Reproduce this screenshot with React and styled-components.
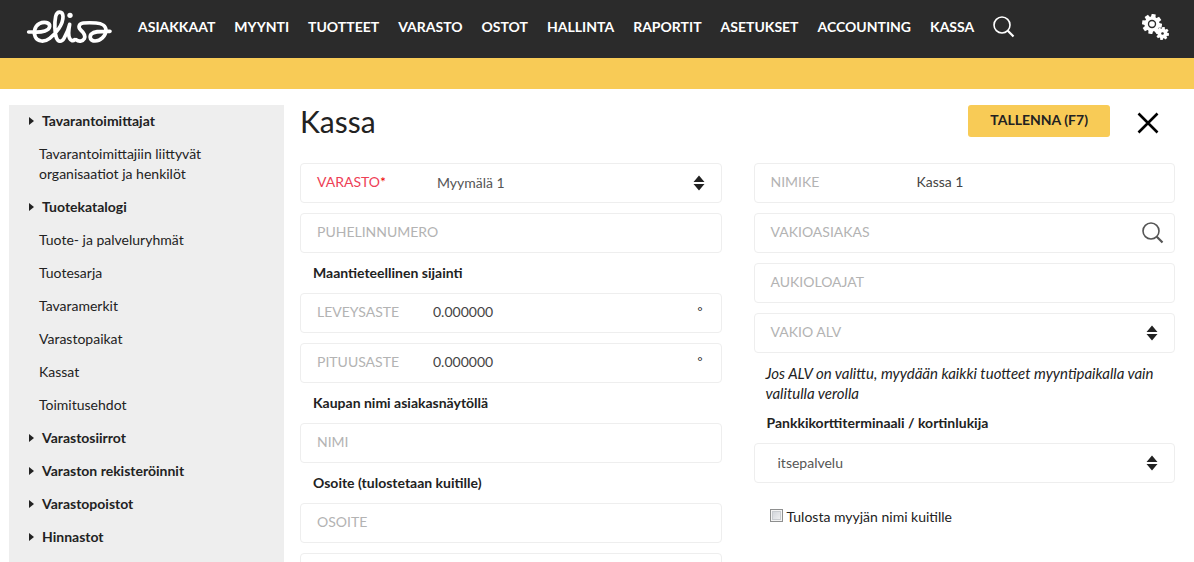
import React from 'react'
import styled, { createGlobalStyle } from 'styled-components'

const GlobalStyle = createGlobalStyle`
    *, *::before, *::after {
        box-sizing: border-box;
    }

    body {
        margin: 0;
        font-family: 'Lato', 'Liberation Sans', sans-serif;
        font-size: 14px;
        line-height: 20px;
        color: #222;
        background: #fff;
    }

    button, input, select {
        font: inherit;
        color: inherit;
    }
`

const Page = styled.div`
    height: 100vh;
    overflow: hidden;
    display: flex;
    flex-direction: column;
`

const Header = styled.header`
    flex: none;
    display: flex;
    align-items: center;
    height: 58px;
    padding: 0 25px 4px 26px;
    background: #2b2b2b;
    color: #fff;
`

const LogoLink = styled.a`
    display: flex;
    margin-right: 25px;
`

const Nav = styled.nav`
    display: flex;
    align-items: center;
    gap: 19px;
    flex: 1;
`

const NavLink = styled.a`
    color: #fff;
    font-weight: 700;
    text-decoration: none;
    text-transform: uppercase;
    white-space: nowrap;
`

const IconButton = styled.button`
    display: flex;
    align-items: center;
    justify-content: center;
    padding: 0;
    border: 0;
    background: none;
    cursor: pointer;
`

const Gears = styled.span`
    display: flex;
    align-items: flex-end;
    padding-bottom: 6px;

    svg + svg {
        margin: 0 0 -6px -6px;
    }
`

const Strip = styled.div`
    flex: none;
    height: 31px;
    background: #f8cb56;
`

const Main = styled.div`
    flex: 1;
    min-height: 0;
    display: flex;
    gap: 16px;
    padding: 16px 19px 0 9px;
`

const Sidebar = styled.aside`
    flex: none;
    width: 275px;
    padding: 6px 20px;
    background: #eee;
`

const Menu = styled.ul`
    display: flex;
    flex-direction: column;
    gap: 13px;
    margin: 0;
    padding: 0;
    list-style: none;
`

const MenuLink = styled.a`
    display: flex;
    align-items: center;
    gap: 8px;
    max-width: 200px;
    padding-left: ${p => p.$group ? '0' : '10px'};
    font-weight: ${p => p.$group ? 700 : 400};
    color: #222;
    text-decoration: none;
`

const Content = styled.main`
    flex: 1;
    min-width: 0;
`

const TitleBar = styled.div`
    display: flex;
    align-items: flex-start;
    height: 58px;
    padding-right: 16px;
`

const Title = styled.h1`
    flex: 1;
    margin: 0;
    font-size: 30px;
    font-weight: 400;
    line-height: 32px;
`

const SaveButton = styled.button`
    height: 32px;
    margin-right: 27px;
    padding: 0 22px 2px;
    border: 0;
    border-radius: 3px;
    background: #f8cb56;
    font-weight: 700;
    cursor: pointer;
`

const CloseButton = styled(IconButton)`
    height: 36px;
`

const Columns = styled.form`
    display: grid;
    grid-template-columns: 1fr 1fr;
    gap: 32px;
`

const Column = styled.div`
    display: flex;
    flex-direction: column;
    gap: 10px;
`

const FieldBox = styled.div`
    flex: none;
    display: flex;
    align-items: center;
    height: 40px;
    padding: 0 16px;
    border: 1px solid #eee;
    border-radius: 4px;
`

const Label = styled.label`
    flex: none;
    min-width: ${p => p.$width || 116}px;
    padding-bottom: 2px;
    color: ${p => p.$required ? '#ee4056' : '#b3b3b3'};
    text-transform: uppercase;
`

const Star = styled.span`
    color: #e00;
`

const Input = styled.input`
    flex: 1;
    min-width: 0;
    height: 38px;
    padding: 0 0 3px;
    border: 0;
    outline: 0;
    background: none;
    color: #444;
`

const Select = styled.select`
    flex: 1;
    min-width: 0;
    height: 38px;
    padding: 0 ${p => p.$indent ? 7 : 4}px;
    border: 0;
    outline: 0;
    appearance: none;
    background: none;
    color: #555;
`

const Unit = styled.span`
    padding: 0 2px 2px 0;
    font-size: 12px;
`

const SelectArrows = styled.svg`
    flex: none;
    pointer-events: none;
`

const LookupButton = styled(IconButton)`
    margin-right: -6px;
`

const SectionTitle = styled.h2`
    margin: 0;
    padding-left: 13px;
    font-size: 14px;
    font-weight: 700;
    line-height: 20px;
`

const Note = styled.p`
    margin: 0;
    padding: 0 12px;
    font-size: 15px;
    font-style: italic;
`

const CheckRow = styled.label`
    display: flex;
    align-items: center;
    gap: 4px;
    padding: 14px 16px;
`

const Checkbox = styled.input`
    appearance: none;
    width: 13px;
    height: 13px;
    margin: 0 0 3px;
    border: 1px solid #8e8f8f;
    background: linear-gradient(135deg, #cbcfd5, #f6f6f6);
    box-shadow: inset 0 0 0 1px #f4f4f4, inset 0 0 0 2px #c9ccd0;

    &:checked {
        background: #2b2b2b;
    }
`

const navItems = ['Asiakkaat', 'Myynti', 'Tuotteet', 'Varasto', 'Ostot', 'Hallinta', 'Raportit', 'Asetukset', 'Accounting', 'Kassa']

const menuItems = [
  { text: 'Tavarantoimittajat', group: true },
  { text: 'Tavarantoimittajiin liittyvät organisaatiot ja henkilöt' },
  { text: 'Tuotekatalogi', group: true },
  { text: 'Tuote- ja palveluryhmät' },
  { text: 'Tuotesarja' },
  { text: 'Tavaramerkit' },
  { text: 'Varastopaikat' },
  { text: 'Kassat' },
  { text: 'Toimitusehdot' },
  { text: 'Varastosiirrot', group: true },
  { text: 'Varaston rekisteröinnit', group: true },
  { text: 'Varastopoistot', group: true },
  { text: 'Hinnastot', group: true },
]

const Logo = () => (
  <svg width='87' height='36' viewBox='78 24 261 108' fill='none' stroke='#fff' strokeWidth='11' strokeLinecap='round' strokeLinejoin='round'>
    <path d='M86 93H100C128 95 148 88 149 76C150 64 132 61 118 68C103 76 100 95 106 108C113 123 134 124 149 112C168 97 190 70 189 46C188 29 171 29 167 46C163 66 164 96 169 110C174 124 185 124 192 112C200 98 206 84 209 70C206 86 204 102 209 112C213 120 219 121 224 116' />
    <path d='M228 116C236 123 248 122 253 113C258 102 250 94 242 87C233 78 237 68 250 66C262 65 274 65 288 66C306 67 318 75 318 88C317 106 301 120 285 120C271 120 267 108 274 99C283 90 300 91 330 91' />
    <circle cx='210' cy='43' r='8' fill='#fff' stroke='none' />
  </svg>
)

const SearchIcon = ({ color }) => (
  <svg width='22' height='22' viewBox='0 0 22 22' fill='none' stroke={color}>
    <circle cx='9' cy='9' r='8' strokeWidth='1.6' />
    <path d='M14.8 14.8L20.5 20.5' strokeWidth='2.2' />
  </svg>
)

const GearIcon = ({ size, hub }) => (
  <svg width={size} height={size} viewBox='-10 -10 20 20' fill='#fff'>
    {[0, 45, 90, 135, 180, 225, 270, 315].map(angle => (
      <path key={angle} d='M-2.4 -6L-2 -10H2L2.4 -6Z' transform={`rotate(${angle + 10})`} />
    ))}
    <circle r='7.6' />
    <circle r={hub ? 4.2 : 2} fill='#2b2b2b' />
    {hub && <circle r='2.8' />}
  </svg>
)

const Arrows = () => (
  <SelectArrows width='12' height='16' viewBox='0 0 12 16' fill='#222'>
    <path d='M0.5 7L6 0.5L11.5 7ZM0.5 9L6 15.5L11.5 9Z' />
  </SelectArrows>
)

const Field = ({ id, label, title, labelWidth, value, unit, lookup }) => (
  <FieldBox>
    {label && <Label htmlFor={id} $width={labelWidth}>{label}</Label>}
    <Input id={id} type='text' aria-label={title} defaultValue={value} />
    {unit && <Unit>{unit}</Unit>}
    {lookup && (
      <LookupButton type='button' aria-label='Hae asiakas'>
        <SearchIcon color='#555' />
      </LookupButton>
    )}
  </FieldBox>
)

const SelectField = ({ id, label, required, value, title }) => (
  <FieldBox>
    {label && (
      <Label htmlFor={id} $required={required}>
        {label}{required && <Star>*</Star>}
      </Label>
    )}
    <Select id={id} aria-label={title} defaultValue={value} $indent={!label}>
      <option value={value}>{value}</option>
    </Select>
    <Arrows />
  </FieldBox>
)

const App = () => {
  return (
    <Page>
      <GlobalStyle />
      <Header>
        <LogoLink href='#' aria-label='Elisa'><Logo /></LogoLink>
        <Nav>
          {navItems.map(item => <NavLink key={item} href='#'>{item}</NavLink>)}
          <IconButton aria-label='Haku'><SearchIcon color='#fff' /></IconButton>
        </Nav>
        <IconButton aria-label='Asetukset'>
          <Gears>
            <GearIcon size={20} hub />
            <GearIcon size={13} />
          </Gears>
        </IconButton>
      </Header>
      <Strip />
      <Main>
        <Sidebar>
          <Menu>
            {menuItems.map(item => (
              <li key={item.text}>
                <MenuLink href='#' $group={item.group}>
                  {item.group && (
                    <svg width='5' height='8' viewBox='0 0 5 8' fill='#222'><path d='M0 0L5 4L0 8Z' /></svg>
                  )}
                  {item.text}
                </MenuLink>
              </li>
            ))}
          </Menu>
        </Sidebar>
        <Content>
          <TitleBar>
            <Title>Kassa</Title>
            <SaveButton type='button'>TALLENNA (F7)</SaveButton>
            <CloseButton type='button' aria-label='Sulje'>
              <svg width='22' height='22' viewBox='0 0 22 22' stroke='#000' strokeWidth='2.6'>
                <path d='M1.5 1.5L20.5 20.5M20.5 1.5L1.5 20.5' />
              </svg>
            </CloseButton>
          </TitleBar>
          <Columns>
            <Column>
              <SelectField id='varasto' label='Varasto' required value='Myymälä 1' />
              <Field id='puhelin' label='Puhelinnumero' />
              <SectionTitle>Maantieteellinen sijainti</SectionTitle>
              <Field id='leveys' label='Leveysaste' value='0.000000' unit='°' />
              <Field id='pituus' label='Pituusaste' value='0.000000' unit='°' />
              <SectionTitle>Kaupan nimi asiakasnäytöllä</SectionTitle>
              <Field id='nimi' label='Nimi' />
              <SectionTitle>Osoite (tulostetaan kuitille)</SectionTitle>
              <Field id='osoite' label='Osoite' />
              <Field id='osoite2' title='Osoite, rivi 2' />
            </Column>
            <Column>
              <Field id='nimike' label='Nimike' labelWidth={146} value='Kassa 1' />
              <Field id='vakioasiakas' label='Vakioasiakas' lookup />
              <Field id='aukiolo' label='Aukioloajat' />
              <SelectField id='alv' label='Vakio ALV' value='' />
              <Note>Jos ALV on valittu, myydään kaikki tuotteet myyntipaikalla vain valitulla verolla</Note>
              <SectionTitle>Pankkikorttiterminaali / kortinlukija</SectionTitle>
              <SelectField id='terminaali' title='Pankkikorttiterminaali' value='itsepalvelu' />
              <CheckRow>
                <Checkbox type='checkbox' />
                Tulosta myyjän nimi kuitille
              </CheckRow>
            </Column>
          </Columns>
        </Content>
      </Main>
    </Page>
  )
}

export default App
